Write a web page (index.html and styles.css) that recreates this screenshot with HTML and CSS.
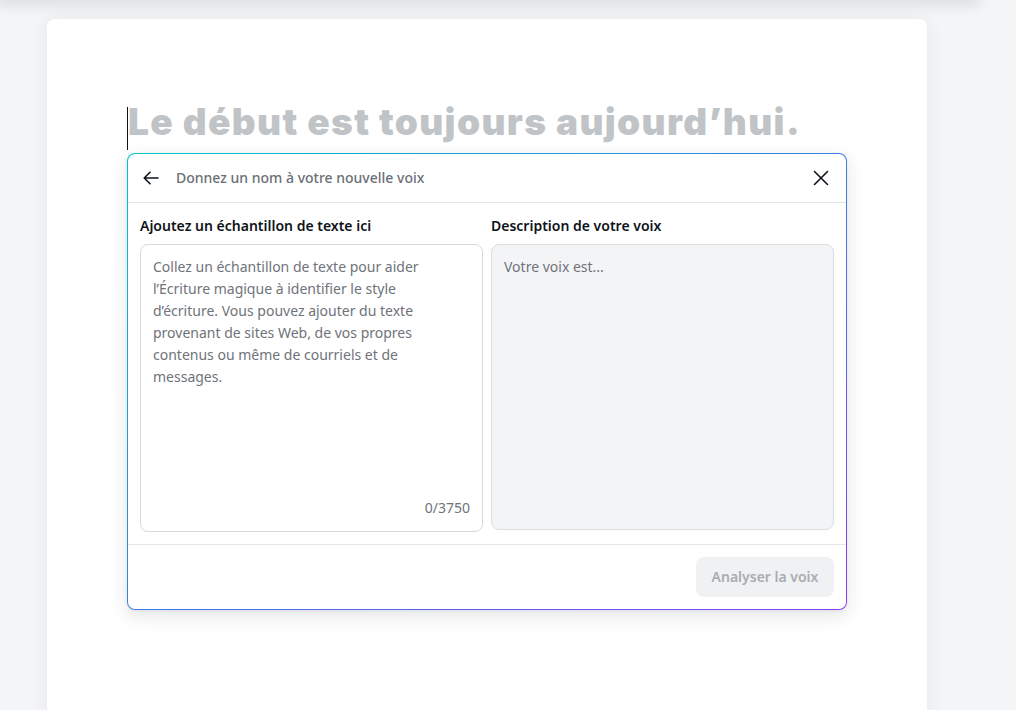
FILE: index.html
```html
<!DOCTYPE html>
<html lang="fr">
<head>
<meta charset="utf-8">
<link rel="stylesheet" href="styles.css">
</head>
<body>
<div class="topbar"></div>
<main class="page">
  <h1 class="heading"><span class="caret"></span><span class="heading-text">Le début est toujours aujourd’hui.</span></h1>
  <section class="dialog">
    <header class="dialog-head">
      <button class="icon-btn back" aria-label="Retour">
        <svg width="18" height="18" viewBox="0 0 18 18" fill="none" stroke="#0e1318" stroke-width="1.6" stroke-linecap="round" stroke-linejoin="round"><path d="M16 9H2.5M8 3.2 2.2 9 8 14.8"/></svg>
      </button>
      <div class="dialog-title">Donnez un nom à votre nouvelle voix</div>
      <button class="icon-btn close" aria-label="Fermer">
        <svg width="18" height="18" viewBox="0 0 18 18" fill="none" stroke="#0e1318" stroke-width="1.6" stroke-linecap="round"><path d="M2.5 2.5l13 13M15.5 2.5l-13 13"/></svg>
      </button>
    </header>
    <div class="dialog-body">
      <div class="col">
        <label class="label">Ajoutez un échantillon de texte ici</label>
        <div class="field">
          <p class="placeholder">Collez un échantillon de texte pour aider l’Écriture magique à identifier le style d’écriture. Vous pouvez ajouter du texte provenant de sites Web, de vos propres contenus ou même de courriels et de messages.</p>
          <div class="counter">0/3750</div>
        </div>
      </div>
      <div class="col">
        <label class="label">Description de votre voix</label>
        <div class="field field-disabled">
          <p class="placeholder">Votre voix est...</p>
        </div>
      </div>
    </div>
    <footer class="dialog-foot">
      <button class="btn-analyse">Analyser la voix</button>
    </footer>
  </section>
</main>
</body>
</html>
```
FILE: styles.css
```css
* { box-sizing: border-box; }
html, body { margin: 0; height: 100%; }
body {
  background: #f4f5f7;
  overflow: hidden;
  font-family: "Noto Sans", "Liberation Sans", sans-serif;
  color: #0e1318;
}
.topbar {
  width: 975px;
  height: 0;
  box-shadow: 0 0 12px 5px rgba(40, 50, 60, 0.13);
}
.page {
  margin: 19px 0 0 47px;
  width: 880px;
  height: 720px;
  background: #fff;
  border-radius: 8px 8px 0 0;
  box-shadow: 0 0 18px rgba(40, 50, 60, 0.07);
  padding: 88px 0 0 80px;
}
.heading {
  margin: 0;
  display: flex;
  align-items: flex-start;
  height: 43px;
  font-family: Inter, sans-serif;
  font-weight: 900;
  font-size: 37px;
  letter-spacing: 1.35px;
  color: #c0c4c7;
  white-space: nowrap;
}
.heading-text {
  line-height: 37px;
  margin-top: -4px;
}
.caret {
  display: inline-block;
  flex: none;
  width: 1px;
  height: 43px;
  background: #0e1318;
}
.dialog {
  margin-top: 3px;
  width: 720px;
  height: 457px;
  border: 1px solid transparent;
  border-radius: 8px;
  background:
    linear-gradient(#fff, #fff) padding-box,
    linear-gradient(to bottom right, #00c4cc, #3b7fe3 50%, #8b3dff) border-box;
  box-shadow: 0 6px 18px rgba(30, 40, 60, 0.12), 0 1px 3px rgba(30, 40, 60, 0.06);
  display: flex;
  flex-direction: column;
}
.dialog-head {
  height: 49px;
  display: flex;
  align-items: center;
  border-bottom: 1px solid #e3e5e8;
  padding: 0 16px 0 14px;
}
.icon-btn {
  border: 0;
  background: none;
  padding: 0;
  width: 18px;
  height: 18px;
  display: flex;
}
.dialog-title {
  flex: 1;
  margin-left: 16px;
  font-size: 14px;
  font-weight: 500;
  color: #6b6f76;
  margin-top: -1px;
}
.dialog-body {
  flex: 1;
  display: grid;
  grid-template-columns: 1fr 1fr;
  gap: 8px;
  padding: 12px;
  border-bottom: 1px solid #e3e5e8;
}
.col { display: flex; flex-direction: column; }
.label {
  font-size: 14px;
  font-weight: 600;
  line-height: 22px;
  margin-bottom: 7px;
}
.field {
  flex: 1;
  border: 1px solid #d7d9dc;
  border-radius: 8px;
  padding: 11px 36px 13px 12px;
  display: flex;
  flex-direction: column;
}
.field-disabled {
  background: #f3f4f6;
  border-color: #dcdee2;
  margin-bottom: 2px;
}
.placeholder {
  margin: 0;
  flex: 1;
  font-size: 14px;
  line-height: 22px;
  color: #6f737a;
}
.counter {
  text-align: right;
  font-size: 14px;
  color: #6f737a;
  line-height: 20px;
  margin-right: -24px;
}
.dialog-foot {
  height: 64px;
  display: flex;
  align-items: center;
  justify-content: flex-end;
  padding: 0 12px;
}
.btn-analyse {
  border: 0;
  border-radius: 8px;
  background: #f0f1f3;
  color: #a9acb1;
  font-family: inherit;
  font-size: 14px;
  font-weight: 600;
  height: 40px;
  width: 138px;
  padding-bottom: 2px;
}
```
